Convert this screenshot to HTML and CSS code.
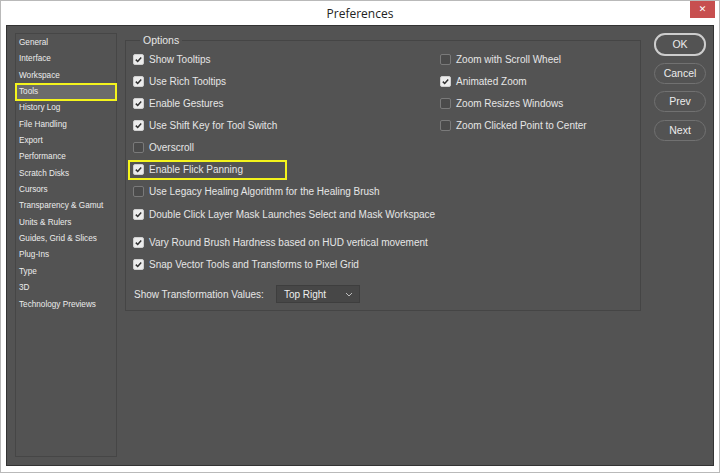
FILE: index.html
```html
<!DOCTYPE html>
<html>
<head>
<meta charset="utf-8">
<link rel="stylesheet" href="styles.css">
</head>
<body>
<div class="window">
  <div class="titlebar">
    <span></span>
    <span class="title">Preferences</span>
    <span class="close">&#x2715;</span>
  </div>
  <div class="content">
    <ul class="sidebar">
      <li>General</li>
      <li>Interface</li>
      <li>Workspace</li>
      <li class="selected">Tools</li>
      <li>History Log</li>
      <li>File Handling</li>
      <li>Export</li>
      <li>Performance</li>
      <li>Scratch Disks</li>
      <li>Cursors</li>
      <li>Transparency &amp; Gamut</li>
      <li>Units &amp; Rulers</li>
      <li>Guides, Grid &amp; Slices</li>
      <li>Plug-Ins</li>
      <li>Type</li>
      <li>3D</li>
      <li>Technology Previews</li>
    </ul>
    <div class="main">
      <fieldset class="options">
        <legend>Options</legend>
        <div class="cols">
          <div class="col-left">
            <div class="row"><span class="cb on"></span>Show Tooltips</div>
            <div class="row"><span class="cb on"></span>Use Rich Tooltips</div>
            <div class="row"><span class="cb on"></span>Enable Gestures</div>
            <div class="row"><span class="cb on"></span>Use Shift Key for Tool Switch</div>
            <div class="row"><span class="cb"></span>Overscroll</div>
            <div class="row"><span class="hl"><span class="cb on"></span>Enable Flick Panning</span></div>
            <div class="row"><span class="cb"></span>Use Legacy Healing Algorithm for the Healing Brush</div>
            <div class="row"><span class="cb on"></span>Double Click Layer Mask Launches Select and Mask Workspace</div>
          </div>
          <div class="col-right">
            <div class="row"><span class="cb"></span>Zoom with Scroll Wheel</div>
            <div class="row"><span class="cb on"></span>Animated Zoom</div>
            <div class="row"><span class="cb"></span>Zoom Resizes Windows</div>
            <div class="row"><span class="cb"></span>Zoom Clicked Point to Center</div>
          </div>
        </div>
        <div class="row gap-top"><span class="cb on"></span>Vary Round Brush Hardness based on HUD vertical movement</div>
        <div class="row"><span class="cb on"></span>Snap Vector Tools and Transforms to Pixel Grid</div>
        <div class="select-row">
          <span class="label">Show Transformation Values:</span>
          <span class="select">Top Right<svg width="8" height="5" viewBox="0 0 8 5"><path d="M1 1 L4 4 L7 1" fill="none" stroke="#bdbdbd" stroke-width="1"/></svg></span>
        </div>
      </fieldset>
    </div>
    <div class="buttons">
      <div class="btn default">OK</div>
      <div class="btn">Cancel</div>
      <div class="btn">Prev</div>
      <div class="btn">Next</div>
    </div>
  </div>
</div>
</body>
</html>
```

FILE: styles.css
```css
html, body {
  margin: 0;
  padding: 0;
  background: #ffffff;
}
.window {
  width: 720px;
  height: 473px;
  box-sizing: border-box;
  border: 1px solid #b9b9b9;
  background: #ffffff;
  padding: 0 5px 6px 5px;
  display: flex;
  flex-direction: column;
  font-family: "Liberation Sans", Arial, sans-serif;
}
.titlebar {
  height: 24px;
  display: grid;
  grid-template-columns: 1fr auto 1fr;
  align-items: start;
}
.title {
  font-family: "Open Sans", "Noto Sans", sans-serif;
  font-size: 12px;
  color: #222;
  line-height: 25px;
}
.close {
  justify-self: end;
  margin-right: -1px;
  width: 25px;
  height: 17px;
  background: #c74f4f;
  color: #fff;
  font-size: 9px;
  font-weight: bold;
  line-height: 17px;
  text-align: center;
  font-family: "DejaVu Sans", sans-serif;
}
.content {
  flex: 1;
  background: #535353;
  border: 1px solid #333;
  display: flex;
  padding: 7px 7px 8px 8px;
  color: #e6e6e6;
}
.sidebar {
  list-style: none;
  margin: 0;
  padding: 1px 0 0 0;
  width: 102px;
  box-sizing: border-box;
  border: 1px solid #464646;
  flex: none;
}
.sidebar li {
  height: 16.35px;
  line-height: 15px;
  padding-left: 3px;
  font-size: 8.2px;
  color: #ececec;
  box-sizing: border-box;
  white-space: nowrap;
}
.sidebar li.selected {
  background: #6b6b6b;
  outline: 2px solid #f4f41c;
  outline-offset: -1px;
  line-height: 16px;
}
.main {
  flex: none;
  width: 516px;
  margin-left: 8px;
}
.options {
  margin: 0;
  padding: 1px 6px 6px 7px;
  border: 1px solid #454545;
  height: 278px;
  box-sizing: border-box;
}
.options legend {
  font-size: 10.5px;
  line-height: 14px;
  padding: 0 3px;
  margin-left: 7px;
  color: #e6e6e6;
}
.cols {
  display: flex;
}
.col-left {
  width: 307px;
  flex: none;
}
.row {
  height: 22.15px;
  display: flex;
  align-items: center;
  font-size: 10px;
  color: #e6e6e6;
  white-space: nowrap;
}
.cb {
  width: 11px;
  height: 11px;
  box-sizing: border-box;
  border-radius: 2px;
  border: 1px solid #7a7a7a;
  background: #4b4b4b;
  margin-right: 5px;
  flex: none;
}
.cb.on {
  background: #ececec url("data:image/svg+xml;utf8,<svg xmlns='http://www.w3.org/2000/svg' width='9' height='9' viewBox='0 0 9 9'><path d='M1.8 4.6 L3.7 6.5 L7.2 2.4' fill='none' stroke='%23303030' stroke-width='1.5'/></svg>") center/9px 9px no-repeat;
  border-color: #cfcfcf;
}
.hl {
  display: flex;
  align-items: center;
  height: 20px;
  box-sizing: border-box;
  border: 2px solid #f4f41c;
  margin-left: -5px;
  padding-left: 3px;
  width: 159px;
}
.gap-top {
  margin-top: 6px;
}
.select-row {
  display: flex;
  align-items: center;
  margin-top: 10px;
  font-size: 10px;
  color: #e6e6e6;
}
.select-row .label {
  margin-left: 1px;
  margin-right: 12px;
}
.select {
  width: 84px;
  height: 18px;
  box-sizing: border-box;
  background: #474747;
  border: 1px solid #3e3e3e;
  display: flex;
  align-items: center;
  justify-content: space-between;
  padding: 0 6px 0 7px;
  color: #eeeeee;
}
.buttons {
  margin-left: 13px;
  width: 52px;
  display: flex;
  flex-direction: column;
  gap: 7.5px;
}
.btn {
  height: 21px;
  box-sizing: border-box;
  border: 1px solid #717171;
  border-radius: 11px;
  text-align: center;
  font-size: 10.5px;
  line-height: 19px;
  color: #ececec;
}
.btn.default {
  height: 23px;
  border: 2px solid #cdcdcd;
  line-height: 19px;
  margin-bottom: -1px;
}
```
